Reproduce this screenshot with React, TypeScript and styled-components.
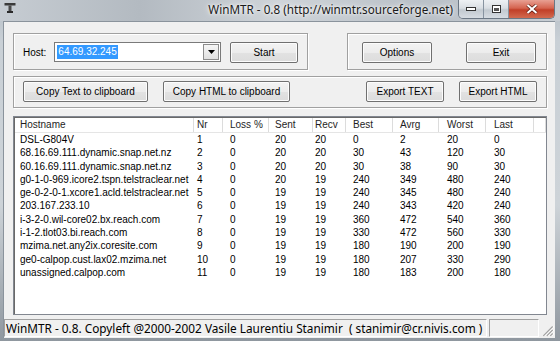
import React from 'react';
import styled, { createGlobalStyle } from 'styled-components';

type Hop = {
  host: string;
  nr: number;
  loss: number;
  sent: number;
  recv: number;
  best: number;
  avrg: number;
  worst: number;
  last: number;
};

const hops: Hop[] = [
  { host: 'DSL-G804V', nr: 1, loss: 0, sent: 20, recv: 20, best: 0, avrg: 2, worst: 20, last: 0 },
  { host: '68.16.69.111.dynamic.snap.net.nz', nr: 2, loss: 0, sent: 20, recv: 20, best: 30, avrg: 43, worst: 120, last: 30 },
  { host: '60.16.69.111.dynamic.snap.net.nz', nr: 3, loss: 0, sent: 20, recv: 20, best: 30, avrg: 38, worst: 90, last: 30 },
  { host: 'g0-1-0-969.icore2.tspn.telstraclear.net', nr: 4, loss: 0, sent: 20, recv: 19, best: 240, avrg: 349, worst: 480, last: 240 },
  { host: 'ge-0-2-0-1.xcore1.acld.telstraclear.net', nr: 5, loss: 0, sent: 19, recv: 19, best: 240, avrg: 345, worst: 480, last: 240 },
  { host: '203.167.233.10', nr: 6, loss: 0, sent: 19, recv: 19, best: 240, avrg: 343, worst: 420, last: 240 },
  { host: 'i-3-2-0.wil-core02.bx.reach.com', nr: 7, loss: 0, sent: 19, recv: 19, best: 360, avrg: 472, worst: 540, last: 360 },
  { host: 'i-1-2.tlot03.bi.reach.com', nr: 8, loss: 0, sent: 19, recv: 19, best: 330, avrg: 472, worst: 560, last: 330 },
  { host: 'mzima.net.any2ix.coresite.com', nr: 9, loss: 0, sent: 19, recv: 19, best: 180, avrg: 190, worst: 200, last: 190 },
  { host: 'ge0-calpop.cust.lax02.mzima.net', nr: 10, loss: 0, sent: 19, recv: 19, best: 180, avrg: 207, worst: 330, last: 290 },
  { host: 'unassigned.calpop.com', nr: 11, loss: 0, sent: 19, recv: 19, best: 180, avrg: 183, worst: 200, last: 180 },
];

const columns: { key: keyof Hop; label: string; width: number; pad: number }[] = [
  { key: 'host', label: 'Hostname', width: 179, pad: 5 },
  { key: 'nr', label: 'Nr', width: 29, pad: 3 },
  { key: 'loss', label: 'Loss %', width: 46, pad: 7 },
  { key: 'sent', label: 'Sent', width: 44, pad: 6 },
  { key: 'recv', label: 'Recv', width: 33, pad: 2 },
  { key: 'best', label: 'Best', width: 47, pad: 7 },
  { key: 'avrg', label: 'Avrg', width: 46, pad: 7 },
  { key: 'worst', label: 'Worst', width: 47, pad: 8 },
  { key: 'last', label: 'Last', width: 48, pad: 8 },
];

const App = () => {
  return (
    <>
      <GlobalStyle />
      <Window>
        <TitleBar>
          <AppIcon viewBox='0 0 12 12'>
            <rect x='0.5' y='1' width='11' height='2.5' fill='#3a3a3a' />
            <rect x='4.5' y='3.5' width='3' height='6' fill='#4a4a4a' />
            <rect x='3' y='9' width='6' height='2' fill='#2a2a2a' />
          </AppIcon>
          <Title>WinMTR - 0.8 (http://winmtr.sourceforge.net)</Title>
          <CaptionButtons>
            <CaptionButton>
              <svg width='10' height='4' viewBox='0 0 10 4'>
                <rect x='0.5' y='0.5' width='9' height='3' fill='#fff' stroke='#333' />
              </svg>
            </CaptionButton>
            <CaptionButton>
              <svg width='9' height='8' viewBox='0 0 9 8'>
                <rect x='0.5' y='0.5' width='8' height='7' fill='#fff' stroke='#333' />
                <rect x='2' y='3' width='5' height='3' fill='#555' />
              </svg>
            </CaptionButton>
            <CloseButton>
              <svg width='12' height='10' viewBox='0 0 12 10'>
                <path d='M1.5 1 L10.5 9 M10.5 1 L1.5 9' stroke='#5a1a10' strokeWidth='3.4' />
                <path d='M1.5 1 L10.5 9 M10.5 1 L1.5 9' stroke='#fff' strokeWidth='2' />
              </svg>
            </CloseButton>
          </CaptionButtons>
        </TitleBar>
        <Frame>
          <Client>
            <Main>
              <TopRow>
                <GroupBox $width={295} $pad='0 9px 0 9px'>
                  <Label>Host:</Label>
                  <Combo>
                    <ComboText>
                      <Selected>64.69.32.245</Selected>
                    </ComboText>
                    <ComboArrow>
                      <svg width='7' height='4' viewBox='0 0 7 4'>
                        <path d='M0 0 H7 L3.5 4 Z' fill='#000' />
                      </svg>
                    </ComboArrow>
                  </Combo>
                  <Button $width={68}>Start</Button>
                </GroupBox>
                <GroupBox $width={200} $pad='0 10px 0 14px'>
                  <Button $width={70}>Options</Button>
                  <Button $width={70}>Exit</Button>
                </GroupBox>
              </TopRow>
              <ExportRow>
                <ButtonPair>
                  <Button $width={125}>Copy Text to clipboard</Button>
                  <Button $width={127}>Copy HTML to clipboard</Button>
                </ButtonPair>
                <ButtonPair>
                  <Button $width={78}>Export TEXT</Button>
                  <Button $width={78}>Export HTML</Button>
                </ButtonPair>
              </ExportRow>
              <ListView>
                <HeaderRow>
                  {columns.map((c) => (
                    <HeaderCell key={c.key} $width={c.width} $pad={c.pad}>
                      {c.label}
                    </HeaderCell>
                  ))}
                  <HeaderFiller />
                </HeaderRow>
                {hops.map((h) => (
                  <Row key={h.nr}>
                    {columns.map((c) => (
                      <Cell key={c.key} $width={c.width} $pad={c.pad}>
                        {h[c.key]}
                      </Cell>
                    ))}
                  </Row>
                ))}
              </ListView>
            </Main>
            <StatusBar>
              <StatusPane>
                WinMTR - 0.8. Copyleft @2000-2002 Vasile Laurentiu Stanimir&nbsp;&nbsp;( stanimir@cr.nivis.com )
              </StatusPane>
              <StatusSide />
              <SizeGrip viewBox='0 0 12 12'>
                <path d='M11 3 L3 11 M11 6 L6 11 M11 9 L9 11' stroke='#fff' strokeWidth='1' />
                <path d='M10 3 L2 11 M10 6 L5 11 M10 9 L8 11' stroke='#a0a0a0' strokeWidth='1' />
              </SizeGrip>
            </StatusBar>
          </Client>
        </Frame>
      </Window>
    </>
  );
};

export default App;

// styled
const GlobalStyle = createGlobalStyle`
  html, body {
    margin: 0;
    padding: 0;
    background: #c4cbd2;
  }
  * {
    box-sizing: border-box;
  }
`;

const Window = styled.div`
  width: 560px;
  height: 341px;
  display: flex;
  flex-direction: column;
  overflow: hidden;
  background: linear-gradient(180deg, #b4bcc4 0%, #c9d0d6 12%, #cdd3d8 60%, #8f979f 100%);
  font-family: 'Liberation Sans', Arial, sans-serif;
`;

const TitleBar = styled.div`
  height: 21px;
  display: flex;
  align-items: flex-start;
  background: linear-gradient(90deg, #c6ccd2 0%, #b3bac1 25%, #cfd4d9 50%, #b9c0c7 75%, #c8ced4 100%);
`;

const AppIcon = styled.svg`
  width: 12px;
  height: 12px;
  margin: 2px 0 0 4px;
`;

const Title = styled.div`
  margin: 2px 5px 0 auto;
  font-family: 'Noto Sans', 'Open Sans', sans-serif;
  font-size: 11.7px;
  line-height: 15px;
  color: #1a1a1a;
  text-shadow: 0 0 6px #fff, 0 0 3px #fff;
  white-space: nowrap;
`;

const CaptionButtons = styled.div`
  display: flex;
  margin-right: 5px;
  border: 1px solid #6b7784;
  border-top: none;
  border-radius: 0 0 5px 5px;
  overflow: hidden;
`;

const CaptionButton = styled.div`
  width: 25px;
  height: 18px;
  display: flex;
  align-items: center;
  justify-content: center;
  background: linear-gradient(180deg, #eef1f4 0%, #d9dee3 45%, #c2c9d0 55%, #d6dce2 100%);
  border-right: 1px solid #8793a0;
`;

const CloseButton = styled.div`
  width: 45px;
  height: 18px;
  display: flex;
  align-items: center;
  justify-content: center;
  background: linear-gradient(180deg, #e8a093 0%, #d5644f 45%, #c13f28 55%, #d26a4f 100%);
`;

const Frame = styled.div`
  flex: 1;
  display: flex;
  padding: 0 7px 3px 3px;
`;

const Client = styled.div`
  flex: 1;
  display: flex;
  flex-direction: column;
  background: #f0f0f0;
  border-top: 1px solid #8a939c;
  border-left: 1px solid #8a939c;
`;

const Main = styled.div`
  flex: 1;
  display: flex;
  flex-direction: column;
  padding: 11px 8px 0 9px;
  font-size: 10px;
  color: #000;
`;

const TopRow = styled.div`
  display: flex;
  justify-content: space-between;
  height: 37px;
`;

const GroupBox = styled.div<{ $width: number; $pad: string }>`
  width: ${(p) => p.$width}px;
  display: flex;
  align-items: center;
  justify-content: space-between;
  padding: ${(p) => p.$pad};
  padding-top: 1px;
  border: 1px solid #a0a0a0;
  box-shadow: inset 1px 1px 0 #fff, 1px 1px 0 #fff;
`;

const Label = styled.span`
  font-size: 10px;
`;

const Combo = styled.div`
  width: 167px;
  height: 20px;
  display: flex;
  align-items: stretch;
  background: #fff;
  border: 1px solid #7a7a7a;
  padding: 1px;
  margin-left: 8px;
  margin-right: auto;
`;

const ComboText = styled.div`
  flex: 1;
  display: flex;
  align-items: center;
  padding-left: 1px;
`;

const Selected = styled.span`
  background: #3399ff;
  color: #fff;
  padding: 1px 1px;
  line-height: 12px;
`;

const ComboArrow = styled.div`
  width: 16px;
  display: flex;
  align-items: center;
  justify-content: center;
  border: 1px solid #8c8c8c;
  background: linear-gradient(180deg, #f6f6f6, #e0e0e0);
`;

const Button = styled.div<{ $width: number }>`
  width: ${(p) => p.$width}px;
  height: 21px;
  display: flex;
  align-items: center;
  justify-content: center;
  border: 1px solid #707070;
  border-radius: 2px;
  background: linear-gradient(180deg, #f3f3f3 0%, #ececec 50%, #e2e2e2 51%, #dcdcdc 100%);
  box-shadow: inset 0 0 0 1px #fcfcfc;
  font-size: 10px;
  color: #000;
  white-space: nowrap;
`;

const ExportRow = styled.div`
  margin-top: 6px;
  height: 32px;
  display: flex;
  align-items: center;
  justify-content: space-between;
  padding: 0 9px 1px 9px;
  border: 1px solid #a0a0a0;
  box-shadow: inset 1px 1px 0 #fff, 1px 1px 0 #fff;
`;

const ButtonPair = styled.div`
  display: flex;
  gap: 15px;
`;

const ListView = styled.div`
  margin-top: 8px;
  height: 199px;
  background: #fff;
  border: 1px solid #828790;
  box-shadow: inset 1px 1px 0 #696969;
  padding: 1px 0 0 1px;
  overflow: hidden;
`;

const HeaderRow = styled.div`
  display: flex;
  height: 15px;
  border-bottom: 1px solid #e5e5e5;
`;

const HeaderCell = styled.div<{ $width: number; $pad: number }>`
  width: ${(p) => p.$width}px;
  flex: none;
  padding-left: ${(p) => p.$pad}px;
  border-right: 1px solid #dcdcdc;
  line-height: 14px;
  color: #1e1e1e;
  white-space: nowrap;
`;

const HeaderFiller = styled.div`
  width: 12px;
  border-right: 1px solid #dcdcdc;
`;

const Row = styled.div`
  display: flex;
  height: 13.3px;
`;

const Cell = styled.div<{ $width: number; $pad: number }>`
  width: ${(p) => p.$width}px;
  flex: none;
  padding-left: ${(p) => p.$pad}px;
  line-height: 13.3px;
  white-space: nowrap;
  overflow: hidden;
`;

const StatusBar = styled.div`
  height: 23px;
  display: flex;
  align-items: flex-end;
  gap: 2px;
  padding: 3px 0 1px 0;
`;

const StatusPane = styled.div`
  flex: 1;
  height: 18px;
  border: 1px solid #a0a0a0;
  border-right-color: #fff;
  border-bottom-color: #fff;
  padding-left: 1px;
  font-family: 'Noto Sans', 'Open Sans', sans-serif;
  font-size: 11.8px;
  line-height: 16px;
  color: #000;
  white-space: nowrap;
  overflow: hidden;
`;

const StatusSide = styled.div`
  width: 50px;
  height: 18px;
  border: 1px solid #a0a0a0;
  border-right-color: #fff;
  border-bottom-color: #fff;
`;

const SizeGrip = styled.svg`
  width: 14px;
  height: 14px;
  flex: none;
`;
